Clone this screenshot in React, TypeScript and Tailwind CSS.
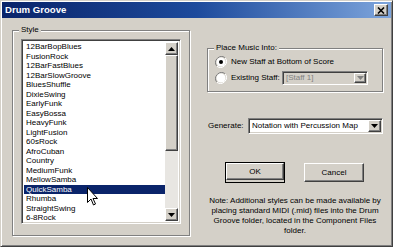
import React from "react";

const styles = [
  "12BarBopBlues",
  "FusionRock",
  "12BarFastBlues",
  "12BarSlowGroove",
  "BluesShuffle",
  "DixieSwing",
  "EarlyFunk",
  "EasyBossa",
  "HeavyFunk",
  "LightFusion",
  "60sRock",
  "AfroCuban",
  "Country",
  "MediumFunk",
  "MellowSamba",
  "QuickSamba",
  "Rhumba",
  "StraightSwing",
  "6-8Rock",
];

const raised =
  "bg-[#d4d0c8] border border-t-white border-l-white border-r-[#404040] border-b-[#404040] shadow-[inset_-1px_-1px_0_#808080]";
const sunken =
  "border border-t-[#808080] border-l-[#808080] border-r-white border-b-white shadow-[inset_1px_1px_0_#404040,inset_-1px_-1px_0_#d4d0c8]";
const etched =
  "border border-[#808080] shadow-[inset_1px_1px_0_#fff,1px_1px_0_#fff]";

function Arrow({ up, gray }: { up?: boolean; gray?: boolean }) {
  return (
    <svg width="7" height="4" viewBox="0 0 7 4">
      <path
        d={up ? "M3.5 0 L7 4 L0 4 Z" : "M0 0 L7 0 L3.5 4 Z"}
        fill={gray ? "#808080" : "#000"}
      />
    </svg>
  );
}

function Radio({ checked }: { checked?: boolean }) {
  return (
    <svg width="12" height="12" viewBox="0 0 12 12" className="shrink-0">
      <path d="M10.2 1.8 A6 6 0 0 0 1.8 10.2" stroke="#808080" fill="none" />
      <path d="M1.8 10.2 A6 6 0 0 0 10.2 1.8" stroke="#fff" fill="none" />
      <circle cx="6" cy="6" r="4.5" fill="#fff" />
      {checked && <circle cx="6" cy="6" r="2" fill="#000" />}
    </svg>
  );
}

function Group({
  label,
  className,
  children,
}: {
  label: string;
  className: string;
  children: React.ReactNode;
}) {
  return (
    <div className={`relative ${etched} ${className}`}>
      <span className="absolute -top-[6px] left-[6px] bg-[#d4d0c8] px-[2px] leading-[10px]">
        {label}
      </span>
      {children}
    </div>
  );
}

function Cursor() {
  return (
    <svg
      className="absolute left-[86px] top-[186px]"
      width="12"
      height="19"
      viewBox="0 0 12 19"
    >
      <path
        d="M0.5 0.5 L0.5 15.5 L4 12 L6.5 18 L8.5 17 L6 11.5 L10.5 11.5 Z"
        fill="#fff"
        stroke="#000"
        strokeWidth="1"
      />
    </svg>
  );
}

export default function App() {
  return (
    <div className="relative w-[393px] h-[247px] bg-[#d4d0c8] border border-t-[#d4d0c8] border-l-[#d4d0c8] border-r-[#404040] border-b-[#404040] shadow-[inset_1px_1px_0_#fff,inset_-1px_-1px_0_#808080] flex flex-col font-['Liberation_Sans',Arial,sans-serif] text-[8px] text-black overflow-hidden">
      <div className="mx-[1px] mt-[1px] h-[16px] flex items-center justify-between pl-[3px] pr-[3px] bg-linear-to-r from-[#0a246a] via-[#1d4a9c] to-[#7ea5dc]">
        <span className="text-white font-bold text-[9.6px]">Drum Groove</span>
        <div className={`w-[14px] h-[12px] flex items-center justify-center ${raised}`}>
          <svg width="8" height="7" viewBox="0 0 8 7">
            <path d="M1 0.5 L7 6.5 M7 0.5 L1 6.5" stroke="#000" strokeWidth="1.6" />
          </svg>
        </div>
      </div>

      <div className="flex pl-[11px] pt-[12px]">
        <Group label="Style" className="w-[178px] h-[206px] pl-[8px] pt-[8px]">
          <div className={`w-[160px] h-[185px] bg-white flex p-[1px] ${sunken}`}>
            <div className="flex-1 overflow-hidden pt-[1px] pl-[1px]">
              {styles.map((s) => (
                <div
                  key={s}
                  className={`h-[9.5px] leading-[9.5px] pl-[2px] whitespace-nowrap ${
                    s === "QuickSamba" ? "bg-[#0a246a] text-white" : ""
                  }`}
                >
                  {s}
                </div>
              ))}
            </div>
            <div className="w-[13px] flex flex-col bg-[#e8e6e2] my-[1px] mr-[1px]">
              <div className={`h-[13px] flex items-center justify-center ${raised}`}>
                <Arrow up />
              </div>
              <div className={`h-[96px] ${raised}`} />
              <div className="flex-1" />
              <div className={`h-[13px] flex items-center justify-center ${raised}`}>
                <Arrow />
              </div>
            </div>
          </div>
        </Group>

        <div className="ml-[17px] w-[176px] flex flex-col pt-[18px]">
          <Group label="Place Music Into:" className="h-[44px] pl-[7px] pt-[7px] flex flex-col gap-[3px]">
            <div className="flex items-center gap-[4px] h-[12px]">
              <Radio checked />
              <span>New Staff at Bottom of Score</span>
            </div>
            <div className="flex items-center h-[14px]">
              <Radio />
              <span className="ml-[4px] w-[51px]">Existing Staff:</span>
              <div className={`w-[86px] h-[14px] bg-[#d4d0c8] flex items-center ${sunken}`}>
                <span className="flex-1 pl-[3px] text-[#808080]">[Staff 1]</span>
                <div className={`w-[12px] h-[10px] mr-[1px] flex items-center justify-center ${raised}`}>
                  <Arrow gray />
                </div>
              </div>
            </div>
          </Group>

          <div className="mt-[26px] flex items-center">
            <span className="w-[41px] pl-[1px]">Generate:</span>
            <div className={`w-[135px] h-[16px] bg-white flex items-center ${sunken}`}>
              <span className="flex-1 pl-[3px] whitespace-nowrap">Notation with Percussion Map</span>
              <div className={`w-[13px] h-[12px] mr-[1px] flex items-center justify-center ${raised}`}>
                <Arrow />
              </div>
            </div>
          </div>

          <div className="mt-[29px] flex justify-center gap-[20px]">
            <div className="outline outline-1 outline-black">
              <div className={`w-[58px] h-[17px] flex items-center justify-center ${raised}`}>OK</div>
            </div>
            <div className={`w-[60px] h-[19px] flex items-center justify-center ${raised}`}>Cancel</div>
          </div>

          <p className="mt-[14px] text-center leading-[10px]">
            Note: Additional styles can be made available by
            <br />
            placing standard MIDI (.mid) files into the Drum
            <br />
            Groove folder, located in the Component Files
            <br />
            folder.
          </p>
        </div>
      </div>
      <Cursor />
    </div>
  );
}
